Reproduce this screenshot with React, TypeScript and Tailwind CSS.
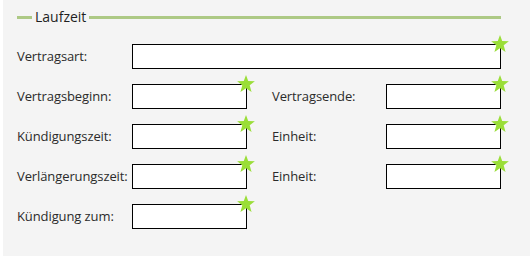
function Star() {
  return (
    <svg className="absolute -right-[9px] -top-[10px] h-[17px] w-[18px]" viewBox="0 0 24 23">
      <polygon
        points="12,0 15,8 24,8.5 17,14 19.5,23 12,18 4.5,23 7,14 0,8.5 9,8"
        fill="#9ade38"
      />
    </svg>
  );
}

function Field({ wide = false }: { wide?: boolean }) {
  return (
    <div className={`relative h-[25px] border-[1.5px] border-black bg-white ${wide ? 'w-[369px]' : 'w-[115px]'}`}>
      <Star />
    </div>
  );
}

function Label({ text }: { text: string }) {
  return <div className="text-[13px] tracking-[-0.1px] text-[#2b2b2b]">{text}</div>;
}

export default function App() {
  return (
    <div className="h-[256px] w-[530px] bg-white" style={{ fontFamily: '"Open Sans", sans-serif' }}>
      <div className="ml-[3px] h-full bg-[#f4f4f4] pl-[14px] pr-[29px] pt-[8px]">
        <div className="flex items-center">
          <div className="h-[3px] w-[15px] bg-[#adc985]" />
          <span className="px-[3px] text-[14px] leading-[18px] text-[#1f1f1f]">Laufzeit</span>
          <div className="h-[3px] flex-1 bg-[#adc985]" />
        </div>

        <div className="mt-[18px] flex flex-col gap-[15px]">
          <div className="flex items-center">
            <div className="w-[115px]"><Label text="Vertragsart:" /></div>
            <Field wide />
          </div>
          <div className="flex items-center">
            <div className="w-[115px]"><Label text="Vertragsbeginn:" /></div>
            <Field />
            <div className="ml-[25px] w-[114px]"><Label text="Vertragsende:" /></div>
            <Field />
          </div>
          <div className="flex items-center">
            <div className="w-[115px]"><Label text="Kündigungszeit:" /></div>
            <Field />
            <div className="ml-[25px] w-[114px]"><Label text="Einheit:" /></div>
            <Field />
          </div>
          <div className="flex items-center">
            <div className="w-[115px]"><Label text="Verlängerungszeit:" /></div>
            <Field />
            <div className="ml-[25px] w-[114px]"><Label text="Einheit:" /></div>
            <Field />
          </div>
          <div className="flex items-center">
            <div className="w-[115px]"><Label text="Kündigung zum:" /></div>
            <Field />
          </div>
        </div>
      </div>
    </div>
  );
}
